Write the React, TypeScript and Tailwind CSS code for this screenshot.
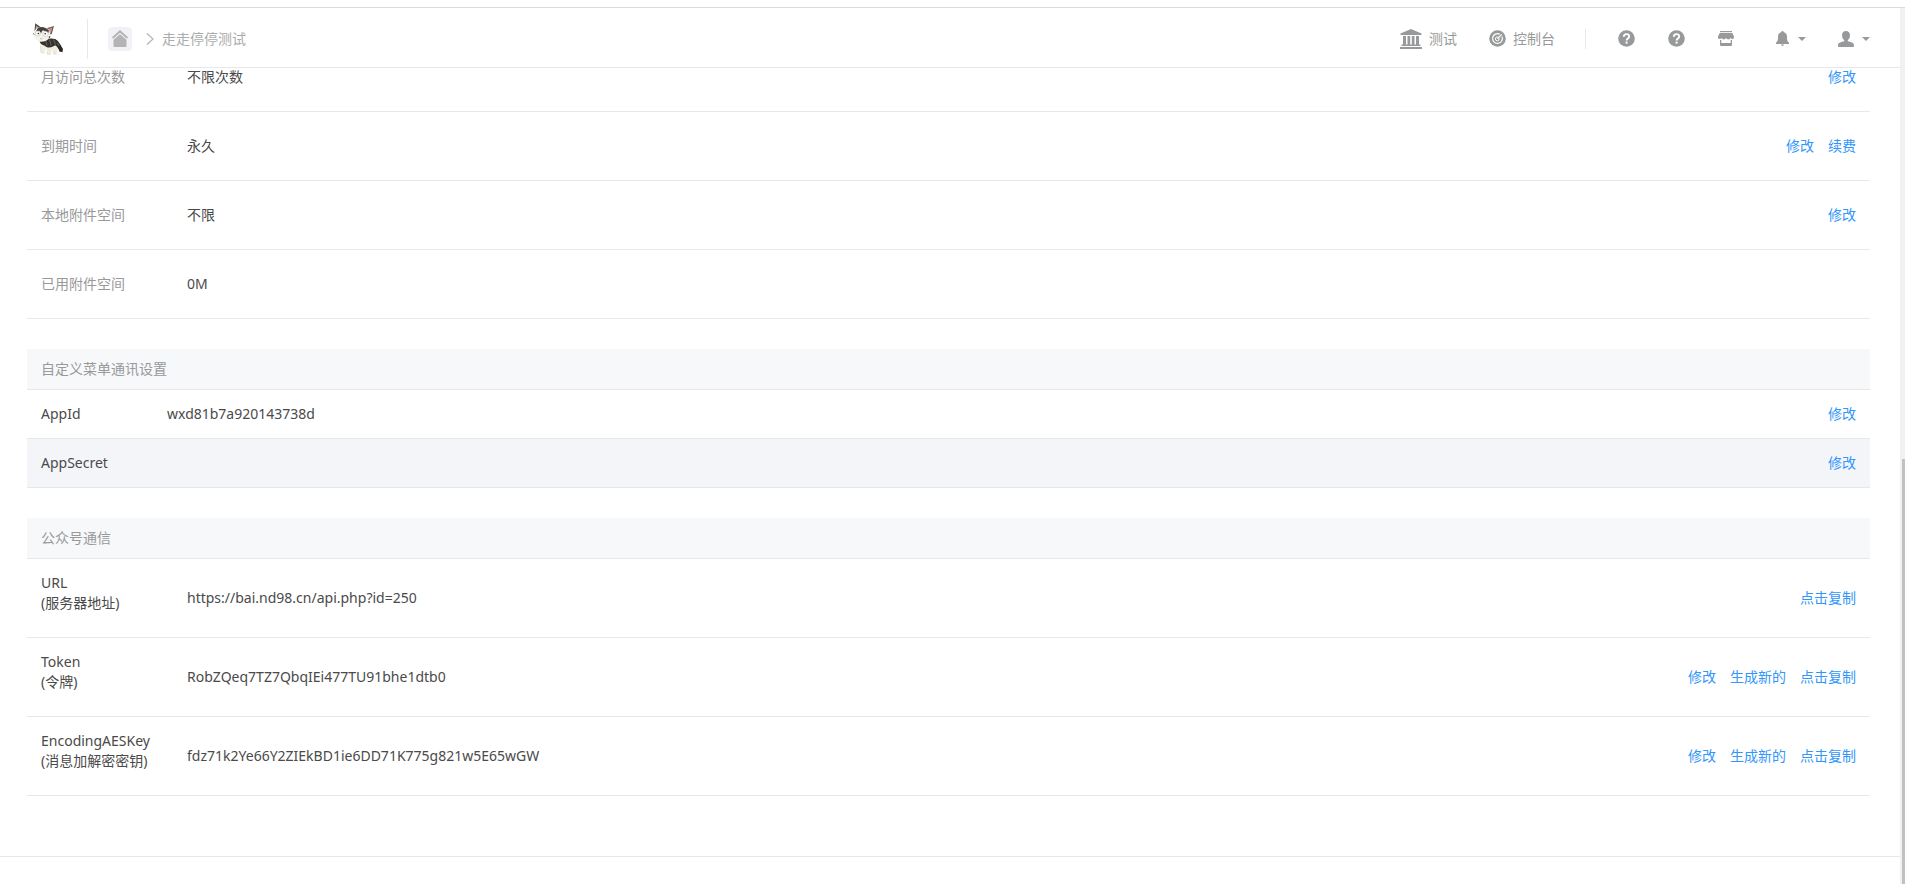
import type { ReactNode } from 'react'

type Row = {
  label: string
  note?: string
  value: string
  actions: string[]
  active?: boolean
}

const quotaRows: Row[] = [
  { label: '月访问总次数', value: '不限次数', actions: ['修改'] },
  { label: '到期时间', value: '永久', actions: ['修改', '续费'] },
  { label: '本地附件空间', value: '不限', actions: ['修改'] },
  { label: '已用附件空间', value: '0M', actions: [] },
]

const menuRows: Row[] = [
  { label: 'AppId', value: 'wxd81b7a920143738d', actions: ['修改'] },
  { label: 'AppSecret', value: '', actions: ['修改'], active: true },
]

const messageRows: Row[] = [
  {
    label: 'URL',
    note: '(服务器地址)',
    value: 'https://bai.nd98.cn/api.php?id=250',
    actions: ['点击复制'],
  },
  {
    label: 'Token',
    note: '(令牌)',
    value: 'RobZQeq7TZ7QbqIEi477TU91bhe1dtb0',
    actions: ['修改', '生成新的', '点击复制'],
  },
  {
    label: 'EncodingAESKey',
    note: '(消息加解密密钥)',
    value: 'fdz71k2Ye66Y2ZIEkBD1ie6DD71K775g821w5E65wGW',
    actions: ['修改', '生成新的', '点击复制'],
  },
]

function CatLogo() {
  return (
    <svg viewBox="0 0 30 33" className="w-[30px] h-[33px]" aria-hidden="true">
      {/* legs */}
      <path d="M7 20l1 10.500 3.500.3 1.200-5 2 6.500h3l1.500-5 1.500 4.700h3l1.300-8-3-6z" fill="#f1ede1" />
      <path d="M7.500 24l.5 6.500 3.500.3M14 30l.5 2.300h3M21 29l-.3 3h3" fill="none" stroke="#d3cec0" strokeWidth=".6" />
      {/* tail and striped back */}
      <path d="M21 17c4 1 5.500 4 9 10l-.6 3.300-3-.7C25.500 26 24 24 20 22z" fill="#2b2a28" />
      <path d="M6.500 19.500C11 17 18 15.500 22 17c3 1.300 4.500 4 4.200 7-2-.8-3.600-1.200-6.200.5-3 1.500-6.500 1.300-8.200-.8-1.500-1-3.500-.2-5.300-4.200z" fill="#34322f" />
      <path d="M12.500 18.500l1.500 5M16.500 17.500l1.700 6M20.500 17.500l2 5M24.500 21l1.500 3" stroke="#857e6e" strokeWidth=".7" />
      {/* ears */}
      <path d="M1.500 9L2.200 1.200 9 6z" fill="#4b4743" />
      <path d="M2.500 8l.6-4.600L7 6.500z" fill="#c79a94" />
      <path d="M12.500 6.500L21 4l-2.300 8-3.200 1z" fill="#5b5450" />
      <path d="M15 7l4.500-1.800-1.700 6.300-2 .5z" fill="#c7938e" />
      {/* head */}
      <path d="M1 11C2 6 7 4 11.500 5.200c4.500 1 6 4 5.500 8.300-.6 4-4 6.300-9 6.200C3.500 19.500-.2 16 1 11z" fill="#f6f3ea" />
      <path d="M5 5.800c3-1.500 8-1 11 3l-1 3-4-3.300-1.800.2-1.200 2.500-1.500-2.500L3 9.500z" fill="#45423e" />
      <circle cx="4.700" cy="11.500" r="2.500" fill="#fff" stroke="#b5b1a9" strokeWidth=".5" />
      <circle cx="12.500" cy="12" r="2.700" fill="#fff" stroke="#b5b1a9" strokeWidth=".5" />
      <circle cx="5.300" cy="11.500" r=".8" fill="#222" />
      <circle cx="12.200" cy="11.800" r=".8" fill="#222" />
      <path d="M1 12.500l-.5-1M17 14l-1 2.300" stroke="#3a3835" strokeWidth="1" />
      <path d="M7 16.500l1.300.4 1.400-.5" fill="none" stroke="#b98f80" strokeWidth=".6" />
    </svg>
  )
}

function HomeIcon() {
  return (
    <svg viewBox="0 0 16 17" className="w-4 h-[17px]" fill="#b4b4b4" aria-hidden="true">
      <path d="M8 0l8 7.300-1.200 1.500L8 2.700 1.200 8.800 0 7.300z" />
      <path d="M8 4.200l6.500 5.500V16a1 1 0 01-1 1h-11a1 1 0 01-1-1V9.700z" />
    </svg>
  )
}

function BankIcon() {
  return (
    <svg viewBox="0 0 22 20" className="w-[22px] h-5" fill="currentColor" aria-hidden="true">
      <path d="M11 0l10.500 4.500V6H.5V4.500z" />
      <path d="M3 7h3v9H3zM7.500 7h2.700v9H7.500zM11.800 7h2.700v9h-2.700zM16 7h3v9h-3z" />
      <path d="M1.500 15.500h19V17h-19zM0 18h22v2H0z" />
    </svg>
  )
}

function GaugeIcon() {
  return (
    <svg viewBox="0 0 17 17" className="w-[17px] h-[17px]" aria-hidden="true">
      <circle cx="8.500" cy="8.500" r="8.300" fill="currentColor" />
      <path d="M10.800 4.200A4.900 4.900 0 1013 6.600" fill="none" stroke="#fff" strokeWidth="1.200" />
      <circle cx="8.300" cy="8.900" r="1.900" fill="none" stroke="#fff" strokeWidth="1" />
      <path d="M8.400 8.700L12.800 4.300" stroke="#fff" strokeWidth="1.200" />
    </svg>
  )
}

function HelpIcon() {
  return (
    <svg viewBox="0 0 17 17" className="w-[17px] h-[17px]" aria-hidden="true">
      <circle cx="8.500" cy="8.500" r="8.300" fill="currentColor" />
      <path d="M5.800 6.700c0-1.700 1.200-2.600 2.700-2.600s2.700.9 2.700 2.400c0 2-2.600 2-2.600 4" fill="none" stroke="#fff" strokeWidth="1.900" />
      <path d="M7.600 11.600h2v2h-2z" fill="#fff" />
    </svg>
  )
}

function ShopIcon() {
  return (
    <svg viewBox="0 0 16 15" className="w-4 h-[15px]" fill="currentColor" aria-hidden="true">
      <path d="M2 0h12v1.200H2z" />
      <path d="M1.700 2h12.600L16 5.500v1A1.600 1.600 0 0114.500 8a2 2 0 01-2-1 2.500 2.500 0 01-4.500 0 2.500 2.500 0 01-4.500 0 2 2 0 01-2 1A1.600 1.600 0 010 6.500v-1z" />
      <path d="M2 9h1.300v3h9.400V9H14v5a1 1 0 01-1 1H3a1 1 0 01-1-1z" />
    </svg>
  )
}

function BellIcon() {
  return (
    <svg viewBox="0 0 13 15" className="w-[13px] h-[15px]" fill="currentColor" aria-hidden="true">
      <path d="M6.500 0c.7 0 1 .4 1.100 1 2.200.6 3.400 2.300 3.400 4.700 0 3.800.5 5 2 5.800V13H0v-1.500c1.500-.8 2-2 2-5.800C2 3.300 3.200 1.600 5.400 1c.1-.6.400-1 1.100-1z" />
      <path d="M5 13.600h3a1.500 1.400 0 01-3 0z" />
    </svg>
  )
}

function UserIcon() {
  return (
    <svg viewBox="0 0 16 16" className="w-4 h-4" fill="currentColor" aria-hidden="true">
      <path d="M8 0c2.500 0 4 1.700 4 4.200 0 2-.8 3.800-2.200 4.800v1.200c3 .6 6.200 1.600 6.200 3.800V15c0 .6-.4 1-1 1H1c-.6 0-1-.4-1-1v-1c0-2.200 3.200-3.200 6.200-3.800V9C4.800 8 4 6.200 4 4.200 4 1.700 5.500 0 8 0z" />
    </svg>
  )
}

function Caret() {
  return (
    <svg viewBox="0 0 8 4" className="w-2 h-1" fill="currentColor" aria-hidden="true">
      <path d="M0 0h8L4 4z" />
    </svg>
  )
}

function Header() {
  return (
    <header className="relative z-10 flex items-center justify-between h-[60px] pt-0.5 pl-[33px] pr-[30px] bg-white border-b border-[#e7e8eb] text-[#98999a]">
      <div className="flex items-center">
        <a href="#" aria-label="首页">
          <CatLogo />
        </a>
        <span className="w-px h-10 ml-6 mr-5 bg-[#e7e8eb]" />
        <a href="#" aria-label="主页" className="flex items-center justify-center w-6 h-6 rounded-sm bg-[#f0f2f5]">
          <HomeIcon />
        </a>
        <svg viewBox="0 0 8 12" className="w-2 h-3 ml-[14px] mr-2" fill="none" stroke="#b4b4b4" strokeWidth="1.200" aria-hidden="true">
          <path d="M1 .5L7 6l-6 5.500" />
        </svg>
        <span className="text-[#aaabac]">走走停停测试</span>
      </div>

      <nav className="flex items-center">
        <a href="#" className="flex items-center gap-[7px]">
          <BankIcon />
          测试
        </a>
        <a href="#" className="flex items-center gap-[7px] ml-8">
          <GaugeIcon />
          控制台
        </a>
        <span className="w-px h-5 mx-[30px] bg-[#e7e8eb]" />
        <a href="#" aria-label="帮助" className="ml-0.5">
          <HelpIcon />
        </a>
        <a href="#" aria-label="工单" className="ml-[33px]">
          <HelpIcon />
        </a>
        <a href="#" aria-label="商城" className="ml-[33px]">
          <ShopIcon />
        </a>
        <button type="button" aria-label="消息" className="flex items-center gap-[9px] ml-[42px]">
          <BellIcon />
          <Caret />
        </button>
        <button type="button" aria-label="账户" className="flex items-center gap-2 ml-8">
          <UserIcon />
          <Caret />
        </button>
      </nav>
    </header>
  )
}

function Actions({ items }: { items: string[] }) {
  return (
    <div className="flex justify-end gap-[14px] text-[#3296fa]">
      {items.map((item) => (
        <a key={item} href="#">
          {item}
        </a>
      ))}
    </div>
  )
}

function SettingsTable({ title, cols, children }: { title?: string; cols: ReactNode; children: ReactNode }) {
  return (
    <table className="w-full table-fixed border-separate border-spacing-0">
      <colgroup>{cols}</colgroup>
      {title && (
        <thead>
          <tr>
            <th colSpan={3} className="h-[41px] px-[14px] text-left font-normal text-[#98999a] bg-[#f7f8fa] border-b border-[#e7e8eb]">
              {title}
            </th>
          </tr>
        </thead>
      )}
      <tbody>{children}</tbody>
    </table>
  )
}

const wideCols = (
  <>
    <col className="w-[160px]" />
    <col />
    <col className="w-[240px]" />
  </>
)

const narrowCols = (
  <>
    <col className="w-[140px]" />
    <col />
    <col className="w-[240px]" />
  </>
)

export default function App() {
  return (
    <div className="min-h-screen flex flex-col bg-white pt-[7px] text-sm leading-5 text-[#4a4a4a] font-['Noto_Sans','Noto_Sans_CJK_SC',sans-serif]">
      <div className="flex flex-1 border-t border-[#dcdcdc]">
        <div className="flex-1 min-w-0">
          <Header />

          <main className="-mt-[25px] pl-[27px] pr-[30px] pb-[60px] space-y-[30px] border-b border-[#e7e8eb]">
            <SettingsTable cols={wideCols}>
              {quotaRows.map((row) => (
                <tr key={row.label}>
                  <td className="h-[69px] pl-[14px] text-[#98999a] border-b border-[#e7e8eb]">{row.label}</td>
                  <td className="border-b border-[#e7e8eb]">{row.value}</td>
                  <td className="pr-[14px] border-b border-[#e7e8eb]">
                    <Actions items={row.actions} />
                  </td>
                </tr>
              ))}
            </SettingsTable>

            <SettingsTable title="自定义菜单通讯设置" cols={narrowCols}>
              {menuRows.map((row) => (
                <tr key={row.label} className={row.active ? 'bg-[#f4f5f9]' : ''}>
                  <td className="h-[49px] pl-[14px] border-b border-[#e7e8eb]">{row.label}</td>
                  <td className="border-b border-[#e7e8eb]">{row.value}</td>
                  <td className="pr-[14px] border-b border-[#e7e8eb]">
                    <Actions items={row.actions} />
                  </td>
                </tr>
              ))}
            </SettingsTable>

            <SettingsTable title="公众号通信" cols={wideCols}>
              {messageRows.map((row) => (
                <tr key={row.label}>
                  <td className="h-[79px] pl-[14px] pb-[10px] border-b border-[#e7e8eb]">
                    <p>{row.label}</p>
                    <p>{row.note}</p>
                  </td>
                  <td className="border-b border-[#e7e8eb]">{row.value}</td>
                  <td className="pr-[14px] border-b border-[#e7e8eb]">
                    <Actions items={row.actions} />
                  </td>
                </tr>
              ))}
            </SettingsTable>
          </main>
        </div>

        {/* slim scrollbar rail */}
        <div className="flex flex-col w-[5px] pl-0.5 bg-[#f1f1f1]" aria-hidden="true">
          <div className="flex-[451]" />
          <div className="flex-[425] bg-[#c1c1c1]" />
        </div>
      </div>
    </div>
  )
}
